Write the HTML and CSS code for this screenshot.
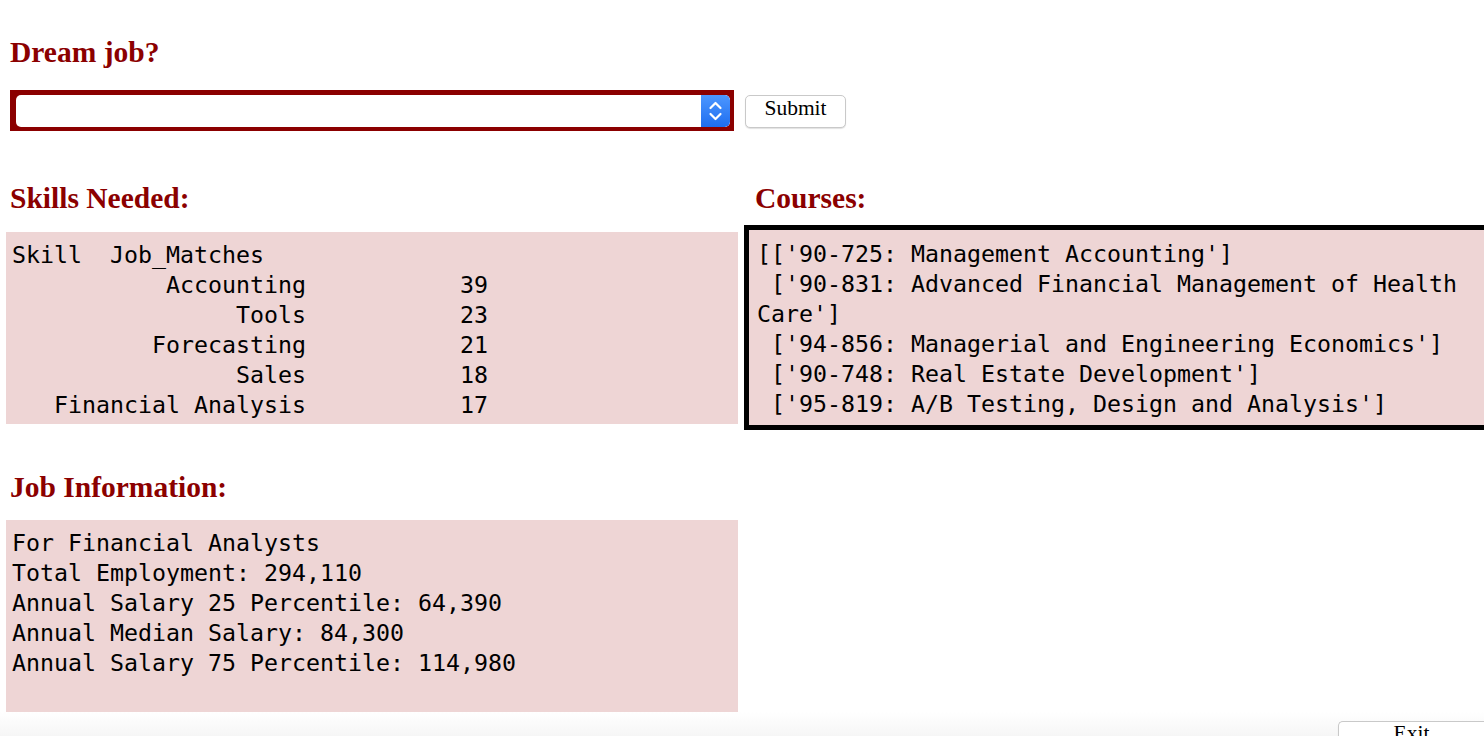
FILE: index.html
```html
<!DOCTYPE html>
<html lang="en">
<head>
<meta charset="utf-8">
<title>Dream job</title>
<link rel="stylesheet" href="styles.css">
</head>
<body>
<main class="page">
  <h2 class="title title-dream">Dream job?</h2>
  <form class="pick-row">
    <div class="select-frame">
      <div class="select-box">
        <span class="stepper">
          <svg width="29" height="32" viewBox="0 0 29 32" aria-hidden="true">
            <polyline points="9.5,13 14.5,8 19.5,13" fill="none" stroke="#fff" stroke-width="2.2" stroke-linecap="round" stroke-linejoin="round"/>
            <polyline points="9.5,19 14.5,24 19.5,19" fill="none" stroke="#fff" stroke-width="2.2" stroke-linecap="round" stroke-linejoin="round"/>
          </svg>
        </span>
      </div>
    </div>
    <button type="button" class="btn btn-submit">Submit</button>
  </form>

  <section class="grid">
    <div class="col col-left">
      <h2 class="title title-skills">Skills Needed:</h2>
      <pre class="panel panel-skills">Skill  Job_Matches
           Accounting           39
                Tools           23
          Forecasting           21
                Sales           18
   Financial Analysis           17</pre>
    </div>
    <div class="col col-right">
      <h2 class="title title-courses">Courses:</h2>
      <pre class="panel panel-courses">[['90-725: Management Accounting']
 ['90-831: Advanced Financial Management of Health Care']
 ['94-856: Managerial and Engineering Economics']
 ['90-748: Real Estate Development']
 ['95-819: A/B Testing, Design and Analysis']</pre>
    </div>
  </section>

  <section class="info">
    <h2 class="title title-info">Job Information:</h2>
    <pre class="panel panel-info">For Financial Analysts
Total Employment: 294,110
Annual Salary 25 Percentile: 64,390
Annual Median Salary: 84,300
Annual Salary 75 Percentile: 114,980
</pre>
  </section>
</main>
<footer class="footer">
  <button type="button" class="btn btn-exit">Exit</button>
</footer>
</body>
</html>
```

FILE: styles.css
```css
html, body {
  margin: 0;
  padding: 0;
  overflow-x: hidden;
  background: #ffffff;
}

body {
  font-family: "Liberation Serif", "Times New Roman", serif;
  color: #000;
}

.page {
  padding: 35px 0 0 6px;
}

.title {
  margin: 0;
  font-family: "Liberation Serif", "Times New Roman", serif;
  font-weight: bold;
  font-size: 29.5px;
  line-height: 34px;
  color: #8b0000;
  padding-left: 4px;
}

.pick-row {
  display: flex;
  align-items: center;
  margin: 21px 0 0 4px;
  gap: 11px;
}

.select-frame {
  width: 724px;
  height: 41px;
  box-sizing: border-box;
  background: #8b0000;
  padding: 5px 4px 4px 6px;
  display: flex;
}

.select-box {
  flex: 1;
  background: #ffffff;
  border-radius: 5px;
  display: flex;
  justify-content: flex-end;
  overflow: hidden;
}

.stepper {
  width: 29px;
  height: 32px;
  background: linear-gradient(#4d97ff, #1e6ef0);
  border-radius: 0 5px 5px 0;
  display: block;
}

.stepper svg {
  display: block;
}

.btn {
  font-family: "Liberation Serif", "Times New Roman", serif;
  font-size: 21.5px;
  background: #ffffff;
  border: 1px solid #c9c9c9;
  border-radius: 5px;
  box-shadow: 0 1px 1px rgba(0, 0, 0, 0.12);
  color: #000;
  padding: 0;
}

.btn-submit {
  width: 101px;
  height: 33px;
  margin-top: 2px;
  line-height: 24px;
  padding-bottom: 8px;
}

.grid {
  display: grid;
  grid-template-columns: 732px 1fr;
  column-gap: 6px;
  margin-top: 50px;
  align-items: start;
}

.col {
  min-width: 0;
}

.title-courses {
  padding-left: 11px;
}

.panel {
  margin: 0;
  font-family: "DejaVu Sans Mono", "Liberation Mono", monospace;
  font-size: 23.25px;
  line-height: 30px;
  background: #eed5d5;
  color: #000;
}

.panel-skills {
  margin-top: 17px;
  padding: 8px 6px 4px 6px;
}

.panel-courses {
  margin-top: 10px;
  width: 740px;
  border: 5px solid #000;
  padding: 9px 8px 6px 8px;
  white-space: pre-wrap;
}

.info {
  margin-top: 40px;
  width: 732px;
}

.panel-info {
  margin-top: 16px;
  padding: 8px 6px 4px 6px;
  height: 180px;
}

.footer {
  height: 40px;
  background: linear-gradient(#ffffff, #f0f0f0);
  display: flex;
  justify-content: flex-end;
  align-items: flex-start;
  padding-top: 9px;
  box-sizing: border-box;
}

.btn-exit {
  width: 146px;
  height: 30px;
  line-height: 22px;
  padding-bottom: 6px;
  margin-right: 0;
  border-right: 0;
  border-radius: 5px 0 0 5px;
}
```
